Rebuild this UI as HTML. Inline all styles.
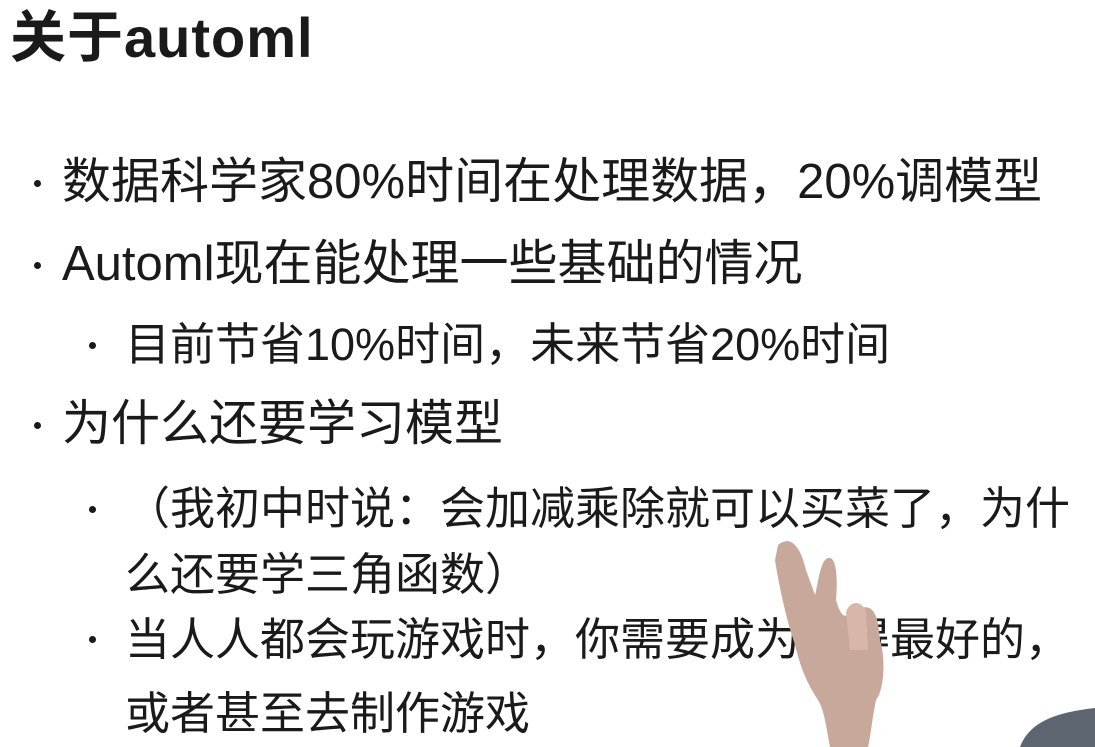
<!DOCTYPE html>
<html><head><meta charset="utf-8"><style>
html,body{margin:0;padding:0;background:#fff;}
body{width:1095px;height:747px;position:relative;overflow:hidden;font-family:"Liberation Sans","Noto Sans CJK SC",sans-serif;color:#1a1a1a;}
.t{position:absolute;white-space:nowrap;line-height:1;}
.h{font-weight:bold;font-size:56px;left:10px;top:10px;letter-spacing:1px;}
.m{font-size:49px;left:62px;}
.s{font-size:45px;left:125px;}
.d{position:absolute;width:7px;height:7px;border-radius:50%;background:#1a1a1a;}
</style></head><body>
<div class="t h">关于automl</div>
<div class="d" style="left:34px;top:180px"></div>
<div class="t m" style="top:158px">数据科学家80%时间在处理数据，20%调模型</div>
<div class="d" style="left:34px;top:262px"></div>
<div class="t m" style="top:240px">Automl现在能处理一些基础的情况</div>
<div class="d" style="left:89px;top:342px"></div>
<div class="t s" style="top:322px">目前节省10%时间，未来节省20%时间</div>
<div class="d" style="left:34px;top:422px"></div>
<div class="t m" style="top:400px">为什么还要学习模型</div>
<div class="d" style="left:89px;top:506px"></div>
<div class="t s" style="top:486px">（我初中时说：会加减乘除就可以买菜了，为什</div>
<div class="t s" style="top:552px">么还要学三角函数）</div>
<div class="d" style="left:89px;top:636px"></div>
<div class="t s" style="top:617px">当人人都会玩游戏时，你需要成为玩得最好的，</div>
<div class="t s" style="top:691px">或者甚至去制作游戏</div>
<svg style="position:absolute;left:0;top:0" width="1095" height="747">
<path d="M778,545 C790,535 800,545 806,570 L815,595 C818,585 820,560 828,558 C836,556 838,575 836,600 C840,615 846,620 848,612 C850,600 855,605 860,608 C874,604 878,615 880,640 C886,660 884,690 876,700 C872,720 870,740 868,747 L830,747 C826,725 824,710 818,700 C805,680 800,665 795,645 C785,615 778,580 775,560 Z" fill="#c9a89c"/>
<path d="M846,612 C850,600 862,600 866,612 L868,650 L850,650 Z" fill="#d8b6aa"/>
<path d="M1020,747 C1030,720 1060,712 1095,708 L1095,747 Z" fill="#5d6570"/>
</svg>
</body></html>
